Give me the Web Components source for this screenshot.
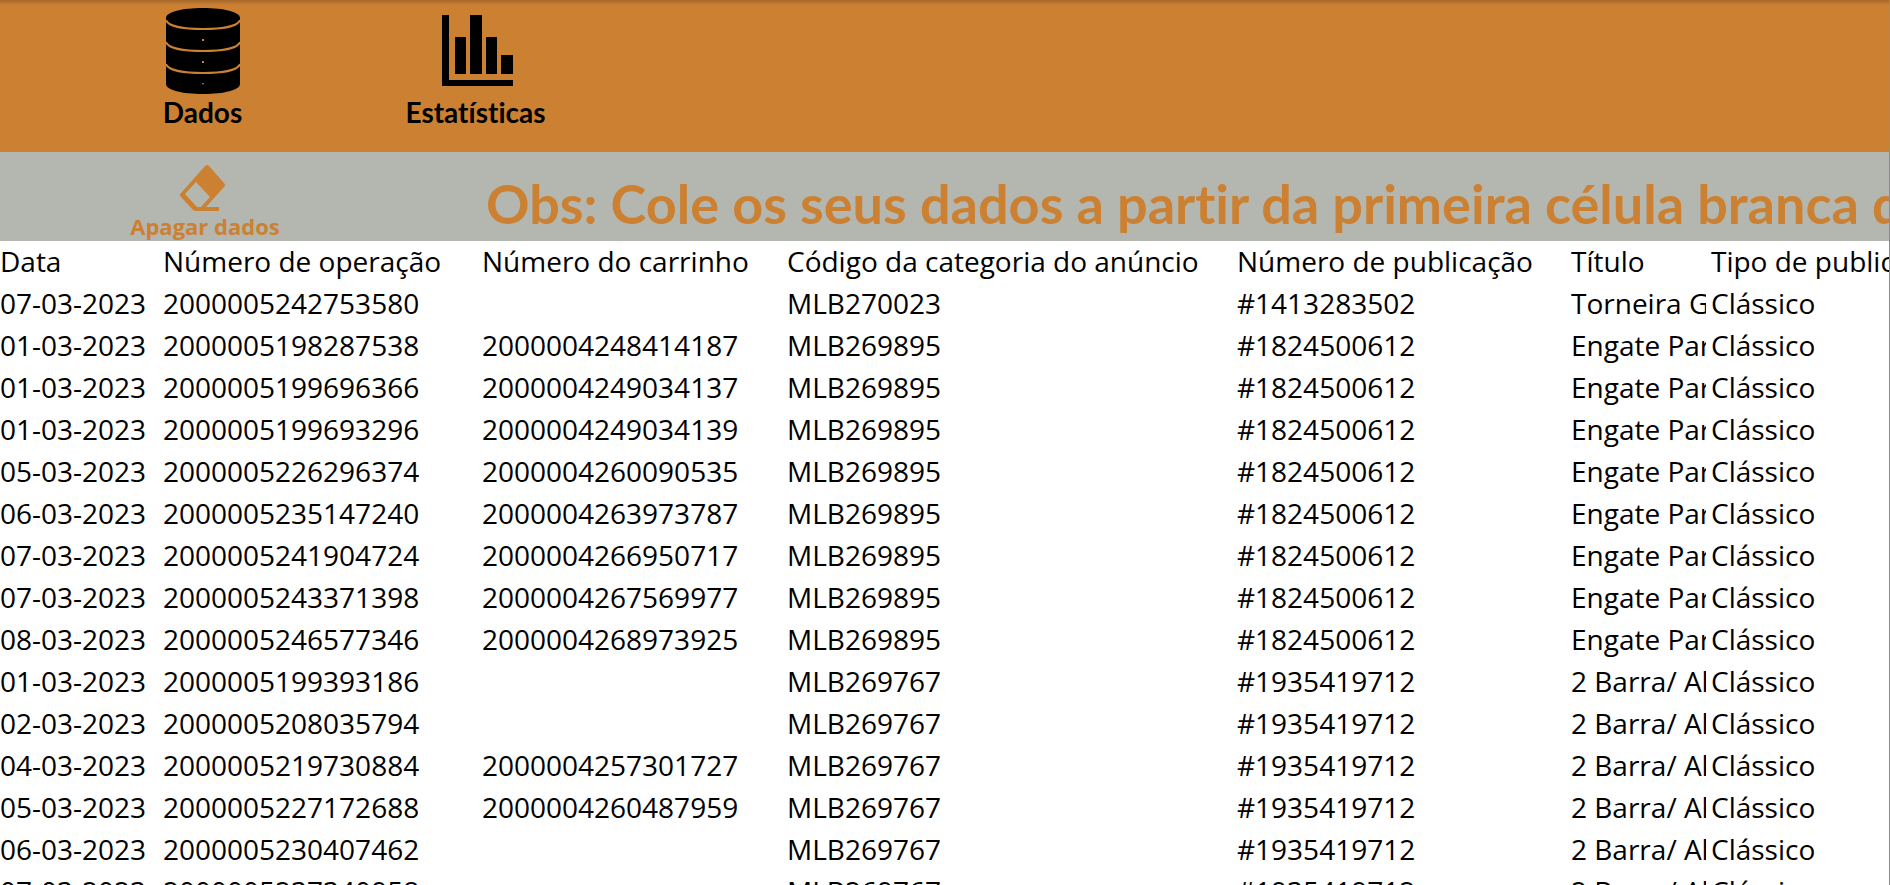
<!DOCTYPE html>
<html lang="pt-BR">
<head>
<meta charset="utf-8">
<title>Dados</title>
<style>
  html, body { margin: 0; height: 100%; }
  body { font-family: Lato, "Noto Sans", sans-serif; font-variant-ligatures: none; color: #000; background: #fff; overflow: hidden; }
</style>
</head>
<body>
<sheet-app></sheet-app>
<script>
class IconButton extends HTMLElement {
  connectedCallback() {
    this.attachShadow({ mode: 'open' }).innerHTML = `
      <style>
        :host { display: block; }
        button { display: flex; flex-direction: column; align-items: center; gap: var(--gap, 2px); margin: 0 auto; padding: 0;
          border: 0; background: none; color: inherit; cursor: pointer; white-space: nowrap;
          font: bold var(--size, 28px)/var(--line, 32px) var(--face, Lato), "Noto Sans", sans-serif; }
        span { font-variant-ligatures: none; }
      </style>
      <button type="button"><slot name="icon"></slot><span><slot></slot></span></button>`;
  }
}
customElements.define('icon-button', IconButton);

class NavBar extends HTMLElement {
  connectedCallback() {
    this.attachShadow({ mode: 'open' }).innerHTML = `
      <style>
        :host { display: block; background: linear-gradient(#a36628, #cc8032 5px); height: 152px; }
        nav { display: grid; grid-template-columns: 162px 81px 162px 141px; padding-top: 8px; }
        .a { grid-column: 2; } .b { grid-column: 4; }
        svg { display: block; height: 86px; }
      </style>
      <nav aria-label="Planilhas">
        <icon-button class="a">
          <svg slot="icon" width="74" height="86" viewBox="0 0 74 86">
            <path d="M0 10v66c0 6 16 10 37 10s37-4 37-10V10C74 4 58 0 37 0S0 4 0 10z"/>
            <path d="M0 12c2 6 17 9 37 9s35-3 37-9M0 34c2 6 17 9 37 9s35-3 37-9M0 56c2 6 17 9 37 9s35-3 37-9" fill="none" stroke="#cc8032" stroke-width="2"/>
            <path d="M36 31h2v2h-2zM36 53h2v2h-2zM36 75h2l-1 2z" fill="#cc8032"/>
          </svg>Dados
        </icon-button>
        <icon-button class="b">
          <svg slot="icon" width="75" height="86" viewBox="-4 0 75 86">
            <path d="M0 7h7v65h64v6H0zM13 29h11v37H13zM28 7h12v59H28zM44 29h11v37H44zM59 47h12v19H59z"/>
          </svg>Estatísticas
        </icon-button>
      </nav>`;
  }
}
customElements.define('nav-bar', NavBar);

class ActionBar extends HTMLElement {
  connectedCallback() {
    this.attachShadow({ mode: 'open' }).innerHTML = `
      <style>
        :host { display: grid; grid-template-columns: 130px 150px 1fr; height: 89px; overflow: hidden; background: #b4b7b0; color: #cc8032; }
        icon-button { grid-column: 2; padding-top: 13px; --size: 22px; --line: 30px; --gap: 0px; --face: "Open Sans"; }
        h1 { margin: 0; padding: 19px 0 0 206px; font-size: 54px; line-height: 66px; white-space: nowrap; overflow: hidden; }
      </style>
      <icon-button>
        <svg slot="icon" width="51" height="46" viewBox="0 0 51 46">
          <path fill-rule="evenodd" fill="#cc8032" d="M25 1q2-2 4 0l15 17q2 2 0 4L26 42h13v4H16q-2 0-3-1L1 32q-2-2 0-4zM16 17 5 29l12 13h4l9-10z"/>
        </svg>Apagar dados
      </icon-button>
      <h1>Obs: Cole os seus dados a partir da primeira célula branca d</h1>`;
  }
}
customElements.define('action-bar', ActionBar);

const E = ['MLB269895', '#1824500612', 'Engate Para'], B = ['MLB269767', '#1935419712', '2 Barra/ Al'];
const ROWS = [
  ['07-03-2023', '2000005242753580', '', 'MLB270023', '#1413283502', 'Torneira G'],
  ['01-03-2023', '2000005198287538', '2000004248414187', ...E],
  ['01-03-2023', '2000005199696366', '2000004249034137', ...E],
  ['01-03-2023', '2000005199693296', '2000004249034139', ...E],
  ['05-03-2023', '2000005226296374', '2000004260090535', ...E],
  ['06-03-2023', '2000005235147240', '2000004263973787', ...E],
  ['07-03-2023', '2000005241904724', '2000004266950717', ...E],
  ['07-03-2023', '2000005243371398', '2000004267569977', ...E],
  ['08-03-2023', '2000005246577346', '2000004268973925', ...E],
  ['01-03-2023', '2000005199393186', '', ...B],
  ['02-03-2023', '2000005208035794', '', ...B],
  ['04-03-2023', '2000005219730884', '2000004257301727', ...B],
  ['05-03-2023', '2000005227172688', '2000004260487959', ...B],
  ['06-03-2023', '2000005230407462', '', ...B],
  ['07-03-2023', '2000005237340958', '', ...B]
];
const HEAD = ['Data', 'Número de operação', 'Número do carrinho', 'Código da categoria do anúncio', 'Número de publicação', 'Título', 'Tipo de publicação'];

class DataSheet extends HTMLElement {
  connectedCallback() {
    const cells = (tag, list) => '<tr>' + list.map(t => `<${tag}><div>${t}</div></${tag}>`).join('') + '</tr>';
    this.attachShadow({ mode: 'open' }).innerHTML = `
      <style>
        :host { display: block; background: #fff; }
        table { width: 100%; table-layout: fixed; border-collapse: collapse; font-family: "Open Sans", "Noto Sans", sans-serif; font-size: 28px; line-height: 40px; }
        th, td { padding: 0 5px 2px 0; font-weight: 400; text-align: left; }
        th:last-child, td:last-child { padding-right: 0; }
        div { overflow: hidden; white-space: nowrap; }
      </style>
      <table>
        <colgroup><col style="width:163px"><col style="width:319px"><col style="width:305px"><col style="width:450px"><col style="width:334px"><col style="width:140px"><col></colgroup>
        <thead>${cells('th', HEAD)}</thead>
        <tbody>${ROWS.map(r => cells('td', [...r, 'Clássico'])).join('')}</tbody>
      </table>`;
  }
}
customElements.define('data-sheet', DataSheet);

class SheetApp extends HTMLElement {
  connectedCallback() {
    this.attachShadow({ mode: 'open' }).innerHTML = `
      <style>:host { display: block; box-sizing: border-box; height: 100vh; overflow: hidden; border-right: 1px solid #8c8c8c; }</style>
      <nav-bar></nav-bar><action-bar></action-bar><data-sheet></data-sheet>`;
  }
}
customElements.define('sheet-app', SheetApp);
</script>
</body>
</html>
